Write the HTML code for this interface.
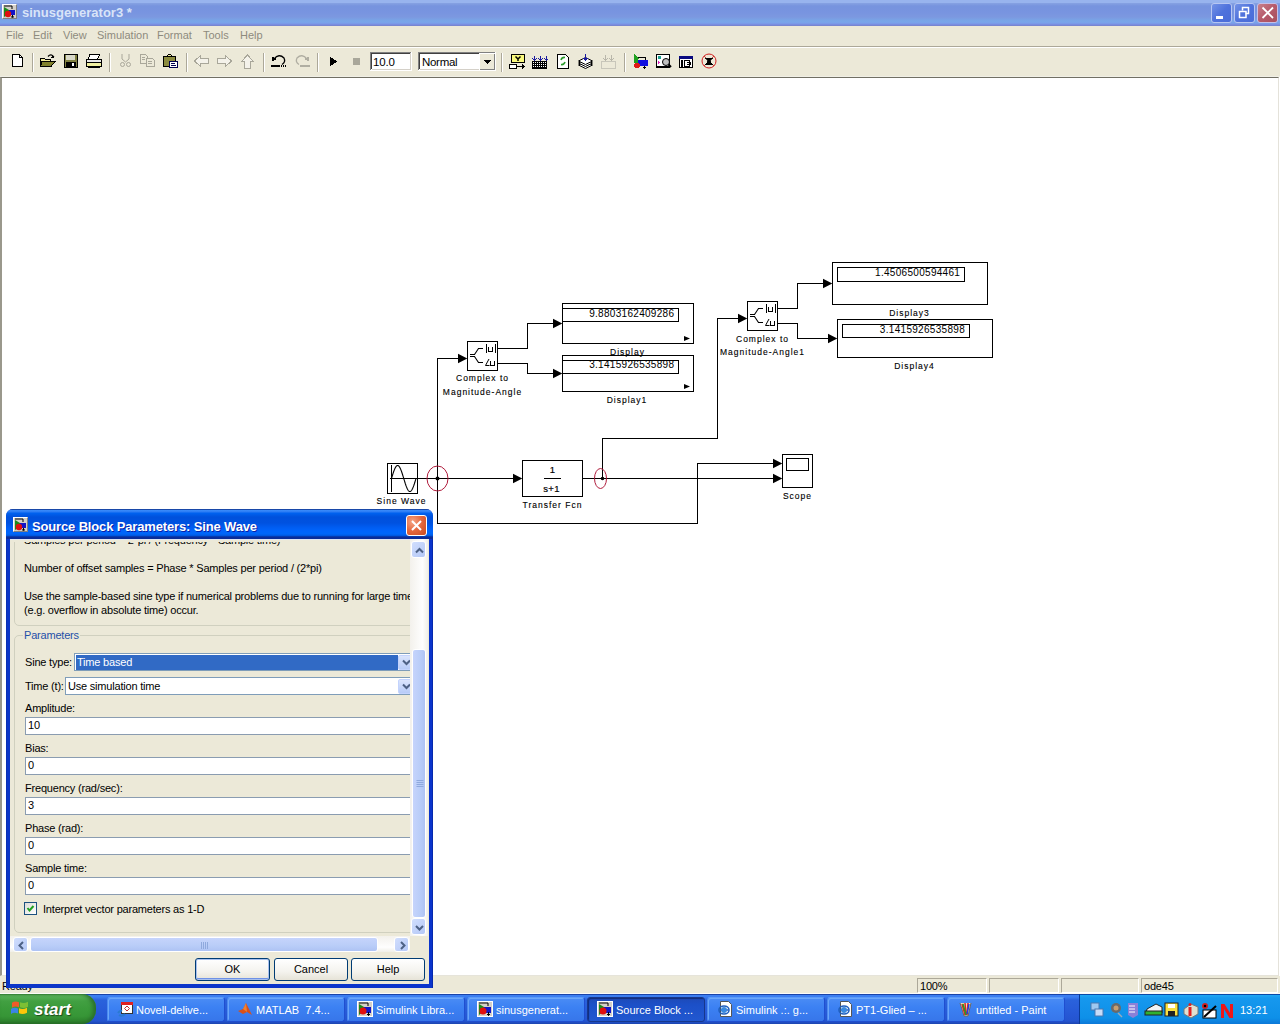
<!DOCTYPE html>
<html><head><meta charset="utf-8">
<style>
*{box-sizing:border-box}
html,body{margin:0;padding:0;width:1280px;height:1024px;overflow:hidden;background:#fff;font-family:"Liberation Sans",sans-serif;position:relative}
.a{position:absolute}
#title{left:0;top:0;width:1280px;height:26px;background:linear-gradient(#98b4ee 0,#98b4ee 2.5px,#84a0e2 3.5px,#7794de 6px,#7894e0 12px,#7c98e0 17px,#78a6e8 21px,#7aa2ea 23px,#7a8ee0 24.5px,#7682c8 26px)}
#title .t{left:22px;top:5px;font-size:13px;font-weight:bold;color:#d8e4f8;letter-spacing:0px}
.wbtn{position:absolute;top:3px;width:21px;height:21px;border:1px solid #b9c9f3;border-radius:3px;background:linear-gradient(135deg,#8aa6ef,#5a7fe0 60%,#4a6fd8)}
#menubar{left:0;top:26px;width:1280px;height:21px;background:#ece9d8;border-bottom:1px solid #aca899}
#menubar span{position:absolute;top:3px;font-size:11px;color:#8e8b7e}
#toolbar{left:0;top:47px;width:1280px;height:30px;background:#ece9d8;border-top:1px solid #fff;border-bottom:1px solid #f0efe6}
#canvas{left:0;top:77px;width:1279px;height:899px;border-bottom:1px solid #e6e4da;background:#fff;border-top:1px solid #716f64;border-left:2px solid #9a988c;border-right:1px solid #e4e2da}
#status{left:0;top:976px;width:1280px;height:18px;background:#ece9d8;border-bottom:1px solid #fbfbf8}
.sp{position:absolute;top:2px;height:15px;border:1px solid #fff;border-top-color:#aca899;border-left-color:#aca899;font-size:11px;padding-left:2px;line-height:14px;letter-spacing:-0.2px}
#taskbar{left:0;top:994px;width:1280px;height:30px;background:linear-gradient(#1a44a8 0,#1a44a8 1px,#3c80f2 1px,#3a7cf0 3px,#2a62dc 6px,#2658d6 20px,#2454cf 27px,#1c44b0 30px)}
#start{left:0;top:994px;width:96px;height:30px;border-radius:0 14px 14px 0;background:linear-gradient(#2f7a2f 0,#5cb55c 1px,#56b056 3px,#42a042 7px,#3a9a3a 15px,#379637 22px,#2e842e 27px,#236c23 30px);box-shadow:inset -3px 0 4px #2a6e2a}
.tb{position:absolute;top:997px;width:118px;height:25px;border-radius:3px;background:linear-gradient(#4a8cf5,#3c81f3 40%,#3776ea);color:#fff;font-size:11px}
.tb span{position:absolute;left:28px;top:6px;white-space:nowrap}
#tray{left:1079px;top:994px;width:201px;height:30px;background:linear-gradient(#0b4aa8 0,#0b4aa8 1px,#20a8f4 1px,#1698ee 4px,#0e90e8 24px,#0c78d8 30px);border-left:1px solid #0a3a98}
/* dialog */
#dlg{left:6px;top:509px;width:427px;height:479px;background:linear-gradient(90deg,#0a2a9c,#0c36c8 1px,#0a34cc 426px,#001c8c);border-radius:7px 7px 0 0}
#dlgtitle{left:6px;top:509px;width:427px;height:30px;border-radius:7px 7px 0 0;background:linear-gradient(#1848a8 0,#1848a8 1px,#3c8cfa 1px,#2a7af4 3px,#0062f0 4px,#0050dc 8px,#0052e0 14px,#005cf0 18px,#0064fc 22px,#0066f8 25px,#0058e0 26.5px,#0a2c98 28px,#0a2c98 30px)}
#dlgtitle .t{left:26px;top:9.5px;font-size:13px;font-weight:bold;color:#fff;letter-spacing:-0.15px;text-shadow:1px 1px 0 #0a1fa6}
#client{left:10px;top:539px;width:419px;height:445px;background:#ece9d8;overflow:hidden}
.lbl{position:absolute;font-size:11px;color:#000;white-space:nowrap;letter-spacing:-0.2px}
.edit{position:absolute;height:18px;background:#fff;border:1px solid #8a9cb0;font-size:11px;padding-left:2px;line-height:15px}
.btn{position:absolute;top:958px;height:23px;border:1px solid #003c74;border-radius:3px;background:linear-gradient(#fff,#f4f3ee 60%,#e6e3d7);font-size:11px;text-align:center;line-height:20px}
.gb{border:1px solid #d0d0bf;border-radius:5px}
.combo{position:absolute;height:18px;background:#fff;border:1px solid #7f9db9}
.sel{background:#316ac5;color:#fff;font-size:11px;line-height:15px;padding-left:1px;letter-spacing:-0.2px}
.dd{position:absolute;width:17px;height:15px;border-radius:2px;background:linear-gradient(#dbe5fd,#b7cbf7);border:1px solid #c3d3fd}
.vtrack{background:linear-gradient(90deg,#f3f1ec,#fefefe 70%,#f0efe8)}
.htrack{background:linear-gradient(#f3f1ec,#fefefe 70%,#f0efe8)}
.sbtn{border:1px solid #fff;border-radius:3px;background:linear-gradient(135deg,#d1defd,#b4c8f7)}
.thumb{border:1px solid #fff;border-radius:3px;background:linear-gradient(90deg,#c6d4fc,#b9cdf8 60%,#aec3f4)}
.thumb2{border:1px solid #fff;border-radius:3px;background:linear-gradient(#c6d4fc,#b9cdf8 60%,#aec3f4)}
.chk{width:13px;height:13px;border:1px solid #1c5180;background:linear-gradient(135deg,#dcdcd7,#fff)}
.tb{border:1px solid #1f4ed0;border-top-color:#5a9af8;border-left-color:#4a8af0;box-shadow:inset 1px 1px 0 #6aa6fa}
.tb.act{background:linear-gradient(#1e4ab8,#1c50c8 30%,#2158d0);border-color:#17378c;box-shadow:inset 1px 1px 1px #102c7a}
</style></head><body>

<!-- Title bar -->
<div id="title" class="a">
  <div class="a t">sinusgenerator3 *</div>
</div>
<div class="a" style="left:1211px;top:3px;width:21px;height:20px;border:1px solid #b7c6f2;border-radius:3px;background:linear-gradient(135deg,#7392e6,#4f72dc 50%,#4a6cd8)"><div class="a" style="left:4px;top:12px;width:7px;height:3px;background:#fff"></div></div>
<div class="a" style="left:1234px;top:3px;width:21px;height:20px;border:1px solid #b7c6f2;border-radius:3px;background:linear-gradient(135deg,#7392e6,#4f72dc 50%,#4a6cd8)"><svg width="19" height="18" style="position:absolute;left:0;top:0"><path d="M7.5 6.5V3.5H13.5V9.5H10.5" fill="none" stroke="#fff" stroke-width="1.5"/><rect x="4.5" y="7.5" width="6.5" height="6" fill="none" stroke="#fff" stroke-width="1.5"/></svg></div>
<div class="a" style="left:1257px;top:3px;width:21px;height:20px;border:1px solid #c6bfe6;border-radius:3px;background:linear-gradient(135deg,#c8808a,#b65a6a 50%,#a8505e)"><svg width="19" height="18" style="position:absolute;left:0;top:0"><path d="M4.5 3.5L15 14M15 3.5L4.5 14" stroke="#fff" stroke-width="1.8"/></svg></div>
<div class="a" style="left:2px;top:4px;width:15px;height:15px;background:#d4d0c8;border:1px solid #fff;border-right-color:#808080;border-bottom-color:#808080">
<svg width="13" height="13" style="position:absolute;left:0;top:0"><path d="M1 1H9V4" fill="none" stroke="#000" stroke-width="1"/><rect x="6" y="5" width="6" height="5" fill="#1414c8"/><path d="M1 2L6 5V9L1 12Z" fill="#1a8a1a"/><circle cx="5" cy="9" r="3.2" fill="#e01010"/><path d="M9.5 10V12.5M8 11.5L9.5 12.8L11 11.5" stroke="#000" fill="none" stroke-width="1"/></svg></div>


<!-- Menu -->
<div id="menubar" class="a">
  <span style="left:6px">File</span><span style="left:33px">Edit</span><span style="left:63px">View</span><span style="left:97px">Simulation</span><span style="left:157px">Format</span><span style="left:203px">Tools</span><span style="left:240px">Help</span>
</div>

<!-- Toolbar -->
<div id="toolbar" class="a"></div>
<!--TB--><svg class="a" style="left:0;top:0" width="740" height="78" viewBox="0 0 740 78" shape-rendering="crispEdges">
<!-- separators -->
<g stroke-width="1">
<path d="M32.5 53V72M109.5 53V72M186.5 53V72M263.5 53V72M317.5 53V72M501.5 53V72M624.5 53V72" stroke="#aca899"/>
<path d="M33.5 53V72M110.5 53V72M187.5 53V72M264.5 53V72M318.5 53V72M502.5 53V72M625.5 53V72" stroke="#fff"/>
</g>
<!-- New -->
<path d="M12.5 54.5H19.5L22.5 57.5V66.5H12.5Z" fill="#fff" stroke="#000"/>
<path d="M19.5 54.5V57.5H22.5" fill="none" stroke="#000"/>
<!-- Open -->
<path d="M40.5 58.5H44.5L45.5 59.5H50.5V66.5H40.5Z" fill="#f4ec9c" stroke="#000"/>
<path d="M42 61.5H55L51 66.5H40.5Z" fill="#80802c" stroke="#000"/>
<path d="M48 56.5Q51 53 54 57" fill="none" stroke="#000" stroke-width="1.2" shape-rendering="auto"/>
<path d="M53 55L55 58.5L51.5 57.5Z" fill="#000"/>
<!-- Save -->
<rect x="64.5" y="54.5" width="13" height="13" fill="#808040" stroke="#000"/>
<rect x="66" y="55" width="9" height="5" fill="#d8d8c8"/>
<rect x="66" y="62" width="10" height="5" fill="#000"/>
<rect x="72" y="63" width="2" height="3" fill="#fff"/>
<!-- Print -->
<path d="M89.5 54.5H99.5L97.5 59.5H88.5Z" fill="#fff" stroke="#000"/>
<rect x="86.5" y="59.5" width="15" height="3" fill="#e8e8e8" stroke="#000"/>
<rect x="86.5" y="62.5" width="15" height="4" fill="#f0f0a0" stroke="#000"/>
<rect x="88" y="66" width="12" height="1.5" fill="#000"/>
<!-- Cut disabled -->
<g fill="none" stroke="#a9a79a" shape-rendering="auto">
<path d="M122 54V59L125.5 62L129 59V54"/>
<circle cx="122.5" cy="64.5" r="2"/><circle cx="128.5" cy="64.5" r="2"/>
</g>
<!-- Copy disabled -->
<g fill="#ece9d8" stroke="#a9a79a">
<path d="M140.5 54.5H145.5L147.5 56.5V63.5H140.5Z"/>
<path d="M146.5 58.5H152.5L154.5 60.5V66.5H146.5Z"/>
<path d="M142 57.5H145M142 59.5H145M148 61.5H152M148 63.5H152"/>
</g>
<!-- Paste -->
<rect x="163.5" y="56.5" width="12" height="10" fill="#8c8c40" stroke="#000"/>
<path d="M166.5 56.5L168.5 54.5H170.5L172.5 56.5Z" fill="#f0f0a0" stroke="#000"/>
<rect x="169.5" y="61.5" width="8" height="6" fill="#fff" stroke="#000050"/>
<path d="M171 63.5H175M171 65.5H176" stroke="#000050"/>
<!-- back/forward/up disabled -->
<g fill="#f4f2ea" stroke="#a9a79a">
<path d="M194.5 61L200.5 55.5V58.5H208.5V63.5H200.5V66.5Z"/>
<path d="M231.5 61L225.5 55.5V58.5H217.5V63.5H225.5V66.5Z"/>
<path d="M247.5 55L241.5 61.5H244.5V68.5H250.5V61.5H253.5Z"/>
</g>
<!-- Undo -->
<path d="M274 59Q279 53 284 58Q286 62 282 64.5" fill="none" stroke="#000" stroke-width="1.3" shape-rendering="auto"/>
<path d="M272 56.5L272.5 61.5L277 59Z" fill="#000"/>
<rect x="271" y="65" width="9" height="2" fill="#000"/>
<rect x="281" y="65" width="1" height="2" fill="#000"/><rect x="283" y="65" width="1" height="2" fill="#000"/><rect x="285" y="65" width="1" height="2" fill="#000"/>
<!-- Redo disabled -->
<path d="M307 59Q302 53 297 58Q295 62 299 64.5" fill="none" stroke="#b0aea2" stroke-width="1.3" shape-rendering="auto"/>
<path d="M309 56.5L308.5 61.5L304 59Z" fill="#b0aea2"/>
<rect x="300" y="65" width="10" height="2" fill="#b0aea2"/>
<!-- Play -->
<path d="M330 56.5L337 61.5L330 66.5Z" fill="#000"/>
<!-- Stop disabled -->
<rect x="353" y="58" width="7" height="7" fill="#a9a79a"/>
<!-- Edit 10.0 -->
<rect x="370" y="52" width="42" height="19" fill="#fff"/>
<path d="M370.5 70V52.5H411.5" fill="none" stroke="#808080"/><path d="M371.5 69V53.5H410.5" fill="none" stroke="#404040"/>
<path d="M370.5 70.5H411.5V52" fill="none" stroke="#fff"/><path d="M371.5 69.5H410.5V53" fill="none" stroke="#d4d0c8"/>
<!-- Combo Normal -->
<rect x="418" y="52" width="78" height="19" fill="#fff"/>
<path d="M418.5 70V52.5H495.5" fill="none" stroke="#808080"/><path d="M419.5 69V53.5H494.5" fill="none" stroke="#404040"/>
<path d="M418.5 70.5H495.5V52" fill="none" stroke="#fff"/><path d="M419.5 69.5H494.5V53" fill="none" stroke="#d4d0c8"/>
<rect x="479" y="53" width="16" height="17" fill="#ece9d8"/>
<path d="M479.5 69.5V53.5H494.5" fill="none" stroke="#fff"/>
<path d="M479.5 69.5H494.5V53.5" fill="none" stroke="#808080"/>
<path d="M484 60H491L487.5 64Z" fill="#000"/>
<!-- Y display icon -->
<rect x="511.5" y="54.5" width="13" height="8" fill="#f8f87c" stroke="#000"/>
<path d="M515.5 56.5L518 59V61M520.5 56.5L518 59" fill="none" stroke="#000" stroke-width="1.5" shape-rendering="auto"/>
<rect x="509.5" y="64.5" width="7" height="3.5" fill="#fff" stroke="#000"/>
<path d="M517 66.5H523" stroke="#000"/>
<path d="M522 63.5L525.5 66.5L522 69.5Z" fill="#000"/>
<!-- build icon -->
<rect x="532" y="61" width="15" height="8" fill="#000"/>
<g fill="#fff"><rect x="533" y="62" width="1" height="1"/><rect x="535" y="62" width="1" height="1"/><rect x="537" y="62" width="1" height="1"/><rect x="539" y="62" width="1" height="1"/><rect x="541" y="62" width="1" height="1"/><rect x="543" y="62" width="1" height="1"/><rect x="545" y="62" width="1" height="1"/>
<rect x="533" y="64" width="1" height="1"/><rect x="535" y="64" width="1" height="1"/><rect x="537" y="64" width="1" height="1"/><rect x="539" y="64" width="1" height="1"/><rect x="541" y="64" width="1" height="1"/><rect x="543" y="64" width="1" height="1"/><rect x="545" y="64" width="1" height="1"/>
<rect x="533" y="66" width="1" height="1"/><rect x="535" y="66" width="1" height="1"/><rect x="537" y="66" width="1" height="1"/><rect x="539" y="66" width="1" height="1"/><rect x="541" y="66" width="1" height="1"/><rect x="543" y="66" width="1" height="1"/><rect x="545" y="66" width="1" height="1"/></g>
<path d="M534.5 56V60M540.5 56V60M546.5 56V60" stroke="#1a1aa0"/>
<path d="M532.5 58.5L534.5 60.5L536.5 58.5M538.5 58.5L540.5 60.5L542.5 58.5M544.5 58.5L546.5 60.5L548 59" fill="none" stroke="#1a1aa0"/>
<!-- update icon -->
<path d="M557.5 54.5H565.5L568.5 57.5V68.5H557.5Z" fill="#fff" stroke="#000"/>
<path d="M561 60Q562 57 565 57.5M565 62Q564 65 561 64.5" fill="none" stroke="#2a9a2a" stroke-width="1.6" shape-rendering="auto"/>
<!-- stack icon -->
<g fill="#fff" stroke="#000" shape-rendering="auto">
<path d="M578.5 65L585.5 61.5L592.5 65L585.5 68.5Z"/>
<path d="M578.5 63L585.5 59.5L592.5 63L585.5 66.5Z"/>
<path d="M578.5 61L585.5 57.5L592.5 61L585.5 64.5Z"/>
</g>
<path d="M585.5 53.5V60" stroke="#1a1aa0" stroke-width="1.5"/>
<path d="M582.5 58L585.5 61.5L588.5 58Z" fill="#1a1aa0"/>
<!-- disabled build -->
<g fill="#c8c6ba"><rect x="601" y="61" width="15" height="1"/><rect x="601" y="68" width="15" height="1"/><rect x="601" y="61" width="1" height="8"/><rect x="615" y="61" width="1" height="8"/></g>
<path d="M605.5 55V60M611.5 55V60M603 58L605.5 60.5L608 58M609 58L611.5 60.5L614 58" fill="none" stroke="#b8b6aa"/>
<!-- library -->
<path d="M637.5 57.5H645.5V66" fill="none" stroke="#000"/>
<path d="M634 54L640 59H634Z" fill="#20a020"/>
<rect x="634" y="59" width="4" height="4" fill="#20a020"/>
<rect x="638" y="60" width="10" height="6" fill="#1010e0"/>
<circle cx="637" cy="65.5" r="3" fill="#e01818"/>
<path d="M644.5 66V68.5M643 67L644.5 68.5L646 67" fill="none" stroke="#000"/>
<!-- model explorer -->
<rect x="656.5" y="54.5" width="13" height="12" fill="#fff" stroke="#000"/>
<rect x="656" y="66" width="14" height="2" fill="#000"/>
<circle cx="659.5" cy="57.5" r="1.5" fill="#20a090"/>
<path d="M658 61V64L660.5 62.5Z" fill="#e020c0"/>
<circle cx="666" cy="62" r="3.5" fill="#c0c0c0" stroke="#000" shape-rendering="auto"/>
<path d="M668.5 64.5L671 67" stroke="#000" stroke-width="2" shape-rendering="auto"/>
<!-- 3rd icon -->
<rect x="679.5" y="56.5" width="13" height="11" fill="#fff" stroke="#000"/>
<rect x="679" y="56" width="14" height="3" fill="#0a0a80"/>
<rect x="681" y="60" width="2" height="7" fill="#000"/>
<path d="M684.5 60.5H689.5V66.5H684.5ZM686.5 62.5H690.5V64.5H686.5" fill="none" stroke="#000"/>
<!-- debugger -->
<circle cx="709" cy="61" r="7" fill="none" stroke="#d02020" stroke-width="1" shape-rendering="auto"/>
<path d="M704 56L714 66M714 56L704 66" stroke="#d02020" stroke-width="0.8" shape-rendering="auto"/>
<ellipse cx="709" cy="61.5" rx="2" ry="2.5" fill="#000" shape-rendering="auto"/>
<path d="M705 58L709 61L713 58M705 65L709 61L713 65" stroke="#000" stroke-width="1" shape-rendering="auto"/>
</svg>
<div class="a" style="left:373px;top:55px;font-size:11.5px;line-height:14px;letter-spacing:-0.2px">10.0</div>
<div class="a" style="left:422px;top:55px;font-size:11.5px;line-height:14px;letter-spacing:-0.3px">Normal</div>
<!--/TB-->

<!-- Canvas -->
<div id="canvas" class="a"></div>
<!--DIAGRAM-->
<svg class="a" style="left:0;top:0" width="1280" height="1024" viewBox="0 0 1280 1024">
<g fill="none" stroke="#000" stroke-width="1" shape-rendering="crispEdges">
<path d="M418 478.5H514 M437.5 358V524 M437 358.5H459 M437 523.5H698 M697.5 463V524 M697 463.5H775 M583 478.5H775 M602.5 438V479 M602 438.5H718 M717.5 318V439 M717 318.5H739 M498 348.5H528 M527.5 323V349 M527 323.5H554 M498 363.5H528 M527.5 363V374 M527 373.5H554 M778 308.5H798 M797.5 283V309 M797 283.5H824 M778 323.5H798 M797.5 323V339 M797 338.5H829"/>
<path d="M387.5 463.5H417.5V493.5H387.5Z M522.5 460.5H582.5V496.5H522.5Z M467.5 341.5H497.5V370.5H467.5Z M747.5 301.5H777.5V330.5H747.5Z M782.5 454.5H812.5V487.5H782.5Z M786.5 458.5H808.5V470.5H786.5Z M562.5 303.5H693.5V343.5H562.5Z M562.5 308.5H678.5V321.5H562.5Z M562.5 355.5H693.5V391.5H562.5Z M562.5 360.5H678.5V373.5H562.5Z M832.5 262.5H987.5V304.5H832.5Z M837.5 267.5H964.5V281.5H837.5Z M837.5 319.5H992.5V357.5H837.5Z M842.5 324.5H969.5V337.5H842.5Z"/>
<path d="M391.5 465V492 M390 478.5H417"/>
</g>
<path d="M513 473.8L522.3 478.5L513 483.2Z M458 353.8L467.3 358.5L458 363.2Z M773 458.8L782.3 463.5L773 468.2Z M773 473.8L782.3 478.5L773 483.2Z M738 313.8L747.3 318.5L738 323.2Z M553 318.8L562.3 323.5L553 328.2Z M553 368.8L562.3 373.5L553 378.2Z M823 278.8L832.3 283.5L823 288.2Z M828 333.8L837.3 338.5L828 343.2Z" fill="#000"/>
<path d="M470 354.5H475 M470 356.5H475 M474.5 354.5L478.5 348.5H483 M474.5 356.5L478.5 362.5H483 M750 314.5H755 M750 316.5H755 M754.5 314.5L758.5 308.5H763 M754.5 316.5L758.5 322.5H763" fill="none" stroke="#000" stroke-width="1.1"/>
<path d="M391.50 478.50 L391.75 477.68 L391.99 476.87 L392.24 476.06 L392.48 475.27 L392.73 474.48 L392.97 473.71 L393.21 472.96 L393.46 472.24 L393.70 471.53 L393.95 470.86 L394.19 470.21 L394.44 469.60 L394.69 469.02 L394.93 468.48 L395.18 467.98 L395.42 467.52 L395.67 467.11 L395.91 466.74 L396.15 466.41 L396.40 466.14 L396.64 465.91 L396.89 465.73 L397.13 465.60 L397.38 465.53 L397.62 465.50 L397.87 465.53 L398.12 465.60 L398.36 465.73 L398.61 465.91 L398.85 466.14 L399.10 466.41 L399.34 466.74 L399.58 467.11 L399.83 467.52 L400.07 467.98 L400.32 468.48 L400.56 469.02 L400.81 469.60 L401.06 470.21 L401.30 470.86 L401.55 471.53 L401.79 472.24 L402.04 472.96 L402.28 473.71 L402.52 474.48 L402.77 475.27 L403.01 476.06 L403.26 476.87 L403.50 477.68 L403.75 478.50 L404.00 479.32 L404.24 480.13 L404.49 480.94 L404.73 481.73 L404.98 482.52 L405.22 483.29 L405.46 484.04 L405.71 484.76 L405.95 485.47 L406.20 486.14 L406.44 486.79 L406.69 487.40 L406.94 487.98 L407.18 488.52 L407.43 489.02 L407.67 489.48 L407.92 489.89 L408.16 490.26 L408.40 490.59 L408.65 490.86 L408.89 491.09 L409.14 491.27 L409.38 491.40 L409.63 491.47 L409.88 491.50 L410.12 491.47 L410.37 491.40 L410.61 491.27 L410.86 491.09 L411.10 490.86 L411.35 490.59 L411.59 490.26 L411.83 489.89 L412.08 489.48 L412.32 489.02 L412.57 488.52 L412.81 487.98 L413.06 487.40 L413.31 486.79 L413.55 486.14 L413.80 485.47 L414.04 484.76 L414.29 484.04 L414.53 483.29 L414.77 482.52 L415.02 481.73 L415.26 480.94 L415.51 480.13 L415.75 479.32 L416.00 478.50" fill="none" stroke="#000" stroke-width="1.1"/>
<path d="M544 478.5H561" stroke="#000" stroke-width="1" shape-rendering="crispEdges"/>
<g fill="none" stroke="#b01c3c" stroke-width="1">
<ellipse cx="437.5" cy="478.5" rx="10.5" ry="12.5"/>
<ellipse cx="600.5" cy="478.5" rx="6" ry="10"/>
</g>
<circle cx="437.5" cy="478.5" r="2" fill="#000"/>
<circle cx="602.5" cy="478.5" r="1.8" fill="#000"/>
<g font-family="Liberation Sans" font-size="8.5" letter-spacing="1" text-anchor="middle" fill="#000" stroke="#000" stroke-width="0.12">
<text x="401.5" y="504.3">Sine Wave</text>
<text x="552.5" y="507.6">Transfer Fcn</text>
<text x="627.5" y="354.8">Display</text>
<text x="627" y="402.8">Display1</text>
<text x="909.5" y="315.7">Display3</text>
<text x="914.5" y="368.6">Display4</text>
<text x="797.5" y="498.8">Scope</text>
<text x="482.5" y="381.4">Complex to</text>
<text x="482.5" y="394.5">Magnitude-Angle</text>
<text x="762.5" y="341.6">Complex to</text>
<text x="762.5" y="354.8">Magnitude-Angle1</text>
</g>
<g font-family="Liberation Sans" font-size="10" letter-spacing="0.3" text-anchor="end" fill="#000">
<text x="674.3" y="316.7">9.8803162409286</text>
<text x="674.3" y="368.2">3.1415926535898</text>
<text x="960.2" y="275.8">1.4506500594461</text>
<text x="965" y="332.6">3.1415926535898</text>
</g>
<g font-family="Liberation Sans" font-size="9.5" text-anchor="middle" fill="#000" stroke="#000" stroke-width="0.2">
<text x="552.5" y="473.3">1</text>
<text x="551.5" y="491.8" letter-spacing="0.3">s+1</text>
</g>
<g fill="none" stroke="#000" stroke-width="1" shape-rendering="crispEdges">
<path d="M486.5 344V353M495.5 344V353M488.5 347V351.5H492.5V347 M766.5 304V313M775.5 304V313M768.5 307V311.5H772.5V307"/>
<path d="M490.5 361V365.5H494.5V361 M770.5 321V325.5H774.5V321"/>
</g>
<path d="M489 359L485.5 365.5H489.5 M769 319L765.5 325.5H769.5" fill="none" stroke="#000" stroke-width="1"/>
<path d="M684 336V341L690 338.5Z M684 384V389L690 386.5Z" fill="#000"/>
</svg>
<!--/DIAGRAM-->

<!-- Status bar -->
<div id="status" class="a">
  <div class="a lbl" style="left:2px;top:4px">Ready</div>
  <div class="sp" style="left:917px;width:70px">100%</div>
  <div class="sp" style="left:989px;width:70px"></div>
  <div class="sp" style="left:1061px;width:78px"></div>
  <div class="sp" style="left:1141px;width:137px">ode45</div>
</div>

<!-- Taskbar -->
<div id="taskbar" class="a"></div>
<div id="start" class="a"></div>
<div id="tray" class="a"></div>
<div class="a" style="left:10px;top:1000px;width:20px;height:17px"><svg width="20" height="17"><g transform="skewY(-4)"><path d="M2 3Q5 1 9 3V8Q5 6 2 8Z" fill="#f05a28"/><path d="M10 3Q14 5 18 3V8Q14 10 10 8Z" fill="#7dc034"/><path d="M1 9Q4 7 8 9V14Q4 12 1 14Z" fill="#3b84e8"/><path d="M9 9Q13 11 17 9V14Q13 16 9 14Z" fill="#fcc60a"/></g></svg></div>
<div class="a" style="left:34px;top:1000px;font-size:17px;font-weight:bold;font-style:italic;color:#fff;letter-spacing:0px;text-shadow:1px 1px 1px #1a4a1a">start</div>
<div class="tb" style="left:107px"><div class="a" style="left:9px;top:3px;width:17px;height:17px"><svg width="17" height="17" style="position:absolute;left:0;top:0"><rect x="4.5" y="1.5" width="11" height="11" fill="#fff" stroke="#333"/><rect x="4" y="1" width="12" height="3" fill="#e02020"/><path d="M10 5L12.5 7.5L10 10L7.5 7.5Z" fill="none" stroke="#c03030"/><path d="M1 12Q3 9 5 10M2 14Q5 16 8 13" fill="none" stroke="#2a7ad0" stroke-width="2"/></svg></div><span>Novell-delive...</span></div>
<div class="tb" style="left:227px"><div class="a" style="left:9px;top:3px;width:17px;height:17px"><svg width="16" height="16" style="position:absolute;left:0;top:0"><path d="M1 10L6 8L9 2L12 8L15 14L10 11L6 13Z" fill="#d8501a"/><path d="M6 8L9 2L10 11Z" fill="#f08030"/></svg></div><span>MATLAB&nbsp; 7.4...</span></div>
<div class="tb" style="left:347px"><div class="a" style="left:9px;top:3px;width:17px;height:17px"><svg width="16" height="16" style="position:absolute;left:0;top:0"><rect x="0.5" y="0.5" width="15" height="15" fill="#d4d0c8" stroke="#fff"/><path d="M2 2H11V5" fill="none" stroke="#000"/><rect x="7" y="6" width="7" height="6" fill="#1414c8"/><path d="M2 3L7 6V10L2 14Z" fill="#1a8a1a"/><circle cx="6" cy="10" r="3.5" fill="#e01010"/><path d="M11.5 11V14.5M10 13L11.5 14.5L13 13" stroke="#000" fill="none"/></svg></div><span>Simulink Libra...</span></div>
<div class="tb" style="left:467px"><div class="a" style="left:9px;top:3px;width:17px;height:17px"><svg width="16" height="16" style="position:absolute;left:0;top:0"><rect x="0.5" y="0.5" width="15" height="15" fill="#d4d0c8" stroke="#fff"/><path d="M2 2H11V5" fill="none" stroke="#000"/><rect x="7" y="6" width="7" height="6" fill="#1414c8"/><path d="M2 3L7 6V10L2 14Z" fill="#1a8a1a"/><circle cx="6" cy="10" r="3.5" fill="#e01010"/><path d="M11.5 11V14.5M10 13L11.5 14.5L13 13" stroke="#000" fill="none"/></svg></div><span>sinusgenerat...</span></div>
<div class="tb act" style="left:587px"><div class="a" style="left:9px;top:3px;width:17px;height:17px"><svg width="16" height="16" style="position:absolute;left:0;top:0"><rect x="0.5" y="0.5" width="15" height="15" fill="#d4d0c8" stroke="#fff"/><path d="M2 2H11V5" fill="none" stroke="#000"/><rect x="7" y="6" width="7" height="6" fill="#1414c8"/><path d="M2 3L7 6V10L2 14Z" fill="#1a8a1a"/><circle cx="6" cy="10" r="3.5" fill="#e01010"/><path d="M11.5 11V14.5M10 13L11.5 14.5L13 13" stroke="#000" fill="none"/></svg></div><span>Source Block ...</span></div>
<div class="tb" style="left:707px"><div class="a" style="left:9px;top:3px;width:17px;height:17px"><svg width="16" height="16" style="position:absolute;left:0;top:0"><path d="M3.5 0.5H11.5L14.5 3.5V15.5H3.5Z" fill="#fff" stroke="#555"/><ellipse cx="7" cy="9" rx="5" ry="4" fill="none" stroke="#1f5fbf" stroke-width="1.6"/><path d="M3 9H11" stroke="#1f5fbf" stroke-width="1.5"/><circle cx="7" cy="9" r="3" fill="#3a8ae0"/></svg></div><span>Simulink .:. g...</span></div>
<div class="tb" style="left:827px"><div class="a" style="left:9px;top:3px;width:17px;height:17px"><svg width="16" height="16" style="position:absolute;left:0;top:0"><path d="M3.5 0.5H11.5L14.5 3.5V15.5H3.5Z" fill="#fff" stroke="#555"/><ellipse cx="7" cy="9" rx="5" ry="4" fill="none" stroke="#1f5fbf" stroke-width="1.6"/><path d="M3 9H11" stroke="#1f5fbf" stroke-width="1.5"/><circle cx="7" cy="9" r="3" fill="#3a8ae0"/></svg></div><span>PT1-Glied – ...</span></div>
<div class="tb" style="left:947px"><div class="a" style="left:9px;top:3px;width:17px;height:17px"><svg width="16" height="18" style="position:absolute;left:0;top:0"><path d="M3 2L7 15H11L14 2" fill="#e8e0c0" stroke="#666"/><path d="M5 3L8 14M8 2L9 14M11 2L10 14" stroke="#e02020" stroke-width="1.5"/><path d="M6 3L9 14" stroke="#20a020" stroke-width="1.5"/><path d="M12 3L10 13" stroke="#2040e0" stroke-width="1.5"/></svg></div><span>untitled - Paint</span></div>
<div class="a" style="left:1090px;top:1001px;width:150px;height:18px">
<svg width="150" height="18">
<rect x="1" y="2" width="8" height="7" fill="#9fc8f0" stroke="#4a78b0"/><rect x="5" y="8" width="8" height="7" fill="#c8dcf8" stroke="#4a78b0"/>
<circle cx="26" cy="7" r="5" fill="#6a6a6a"/><circle cx="26" cy="7" r="2.5" fill="#c8a070"/><path d="M28 12L32 16" stroke="#9ab" stroke-width="1.5"/>
<path d="M38 2H48V14L43 17L38 14Z" fill="#8a80d8"/><path d="M39 5H45M39 8H45M39 11H45" stroke="#fff"/>
<path d="M57 8L66 3L72 6L72 12H56Z" fill="#f4f4f4" stroke="#222"/><rect x="55" y="10" width="17" height="4" fill="#30b030" stroke="#222"/>
<rect x="75" y="2" width="13" height="13" fill="#f8e040" stroke="#222"/><rect x="78" y="3" width="7" height="4" fill="#fff"/><rect x="78" y="10" width="7" height="5" fill="#222"/>
<path d="M94 8L101 3L108 6V13L101 17L94 13Z" fill="#e0e0d0" stroke="#777"/><path d="M100 6V15" stroke="#e02020" stroke-width="3"/><circle cx="100" cy="3.5" r="1.5" fill="#e02020"/>
<rect x="113" y="9" width="13" height="8" fill="#fff" stroke="#000"/><path d="M114 16L126 5" stroke="#000" stroke-width="2"/><circle cx="115" cy="5" r="3" fill="#d02020"/><circle cx="115" cy="5" r="1.3" fill="#000"/>
<path d="M131 17V3H134.5L140 12V3H143V17H139.5L134 8V17Z" fill="#f01818"/>
</svg></div>
<div class="a" style="left:1240px;top:1004px;font-size:11px;color:#fff">13:21</div>


<!-- Dialog -->
<div id="dlg" class="a"></div>
<div id="dlgtitle" class="a"><div class="a t">Source Block Parameters: Sine Wave</div></div>
<div class="a" style="left:13px;top:517px;width:15px;height:15px;background:#d4d0c8;border:1px solid #fff;border-right-color:#808080;border-bottom-color:#808080">
<svg width="13" height="13" style="position:absolute;left:0;top:0"><path d="M1 1H9V4" fill="none" stroke="#000" stroke-width="1"/><rect x="6" y="5" width="6" height="5" fill="#1414c8"/><path d="M1 2L6 5V9L1 12Z" fill="#1a8a1a"/><circle cx="5" cy="9" r="3.2" fill="#e01010"/><path d="M9.5 10V12.5M8 11.5L9.5 12.8L11 11.5" stroke="#000" fill="none" stroke-width="1"/></svg></div>
<div class="a" style="left:406px;top:515px;width:21px;height:21px;border:1px solid #fff;border-radius:3px;background:radial-gradient(circle at 30% 30%,#f5a585,#e4663c 50%,#c74a20)"><svg width="19" height="19" style="position:absolute;left:0;top:0"><path d="M5 5L14 14M14 5L5 14" stroke="#fff" stroke-width="2"/></svg></div>

<div id="client" class="a" style="box-shadow:inset 0 1px 0 #dfe6f6">
  <!-- scroll viewport -->
  <div class="a" style="left:0;top:0;width:400px;height:397px;overflow:hidden;clip-path:inset(3px 0 0 0)">
    <div class="a gb" style="left:4px;top:-30px;width:420px;height:117px"></div>
    <div class="a lbl" style="left:14px;top:-6px;line-height:14px">Samples per period = 2*pi / (Frequency * Sample time)<br><br>Number of offset samples = Phase * Samples per period / (2*pi)<br><br>Use the sample-based sine type if numerical problems due to running for large times<br>(e.g. overflow in absolute time) occur.</div>
    <div class="a gb" style="left:4px;top:96px;width:420px;height:298px"></div>
    <div class="a lbl" style="left:13px;top:90px;padding:0 1px;background:#ece9d8;color:#1f50a8">Parameters</div>
    <div class="a lbl" style="left:15px;top:117px">Sine type:</div>
    <div class="a combo" style="left:64px;top:114px;width:340px"><div class="a sel" style="left:1px;top:1px;width:322px;height:15px">Time based</div><div class="a dd" style="left:323px;top:1px"><svg width="15" height="13" style="position:absolute;left:0;top:0"><path d="M4 4.5L7.5 8L11 4.5" fill="none" stroke="#4d6185" stroke-width="2"/></svg></div></div>
    <div class="a lbl" style="left:15px;top:141px">Time (t):</div>
    <div class="a combo" style="left:55px;top:138px;width:349px"><div class="a" style="left:2px;top:1px;font-size:11px;line-height:15px;letter-spacing:-0.2px">Use simulation time</div><div class="a dd" style="left:332px;top:1px"><svg width="15" height="13" style="position:absolute;left:0;top:0"><path d="M4 4.5L7.5 8L11 4.5" fill="none" stroke="#4d6185" stroke-width="2"/></svg></div></div>
    <div class="a lbl" style="left:15px;top:163px">Amplitude:</div>
    <div class="a edit" style="left:15px;top:178px;width:390px">10</div>
    <div class="a lbl" style="left:15px;top:203px">Bias:</div>
    <div class="a edit" style="left:15px;top:218px;width:390px">0</div>
    <div class="a lbl" style="left:15px;top:243px">Frequency (rad/sec):</div>
    <div class="a edit" style="left:15px;top:258px;width:390px">3</div>
    <div class="a lbl" style="left:15px;top:283px">Phase (rad):</div>
    <div class="a edit" style="left:15px;top:298px;width:390px">0</div>
    <div class="a lbl" style="left:15px;top:323px">Sample time:</div>
    <div class="a edit" style="left:15px;top:338px;width:390px">0</div>
    <div class="a chk" style="left:14px;top:363px"><svg width="11" height="11" style="position:absolute;left:0;top:0"><path d="M2.5 5L4.5 7.5L8.5 3" fill="none" stroke="#21a121" stroke-width="2"/></svg></div>
    <div class="a lbl" style="left:33px;top:364px">Interpret vector parameters as 1-D</div>
  </div>
  <!-- vertical scrollbar -->
  <div class="a vtrack" style="left:400px;top:0;width:18px;height:397px"></div>
  <div class="a sbtn" style="left:401px;top:2px;width:15px;height:17px"><svg width="15" height="17"><path d="M4 10.5L7.5 7L11 10.5" fill="none" stroke="#4d6185" stroke-width="2"/></svg></div>
  <div class="a thumb" style="left:402px;top:110px;width:14px;height:269px"><svg width="14" height="269" style="position:absolute;left:0;top:0"><path d="M3.5 130.5H10.5M3.5 132.5H10.5M3.5 134.5H10.5M3.5 136.5H10.5" stroke="#8fa9dd" stroke-width="1"/></svg></div>
  <div class="a sbtn" style="left:401px;top:379px;width:15px;height:17px"><svg width="15" height="17"><path d="M4 7L7.5 10.5L11 7" fill="none" stroke="#4d6185" stroke-width="2"/></svg></div>
  <!-- horizontal scrollbar -->
  <div class="a htrack" style="left:0;top:397px;width:400px;height:16px"></div>
  <div class="a sbtn" style="left:3px;top:398px;width:15px;height:15px"><svg width="15" height="15"><path d="M9 4L5.5 7.5L9 11" fill="none" stroke="#4d6185" stroke-width="2"/></svg></div>
  <div class="a thumb2" style="left:20px;top:398px;width:348px;height:15px"><svg width="348" height="15" style="position:absolute;left:0;top:0"><path d="M170.5 4V11M172.5 4V11M174.5 4V11M176.5 4V11" stroke="#8fa9dd" stroke-width="1"/></svg></div>
  <div class="a sbtn" style="left:384px;top:398px;width:15px;height:15px"><svg width="15" height="15"><path d="M6 4L9.5 7.5L6 11" fill="none" stroke="#4d6185" stroke-width="2"/></svg></div>
</div>
<div class="btn" style="left:195px;width:75px;box-shadow:inset 0 0 0 1px #a8c0ee, inset 0 -2px 0 #6f92e6">OK</div>
<div class="btn" style="left:274px;width:74px">Cancel</div>
<div class="btn" style="left:351px;width:74px">Help</div>


</body></html>
